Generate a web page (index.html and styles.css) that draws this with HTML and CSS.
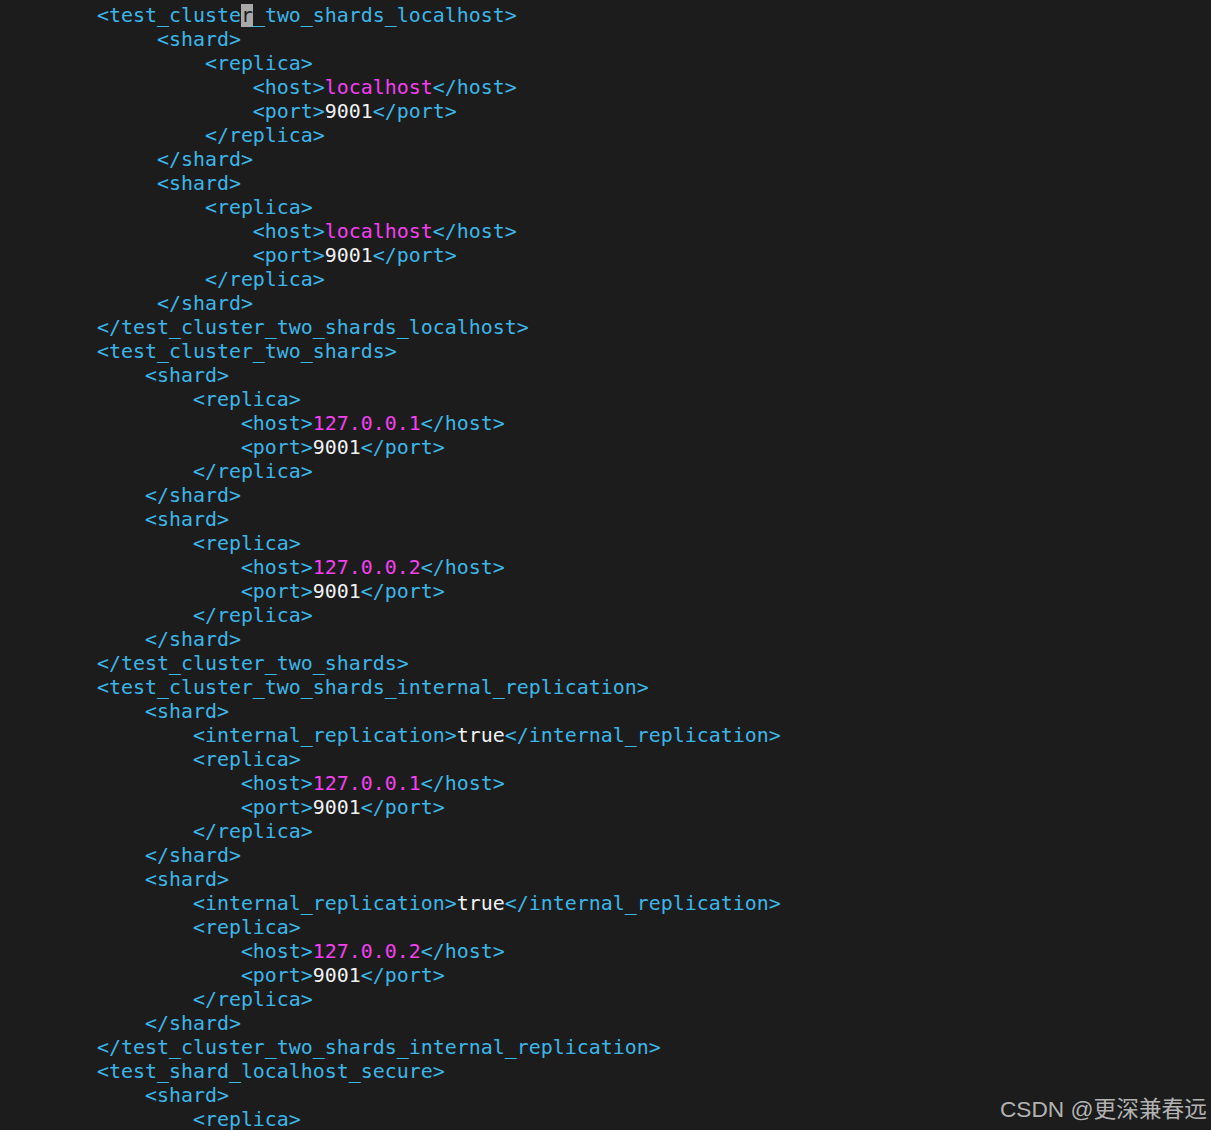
FILE: index.html
```html
<!DOCTYPE html>
<html lang="en">
<head>
  <meta charset="UTF-8" />
  <meta name="viewport" content="width=device-width, initial-scale=1.0">
  <title>config.xml</title>
  <link rel="stylesheet" href="styles.css">
</head>
<body>
  <div class="terminal">
<pre class="code"><span class="t">        &lt;test_cluste</span><span class="cur">r</span><span class="t">_two_shards_localhost&gt;</span>
<span class="t">             &lt;shard&gt;</span>
<span class="t">                 &lt;replica&gt;</span>
<span class="t">                     &lt;host&gt;</span><span class="h">localhost</span><span class="t">&lt;/host&gt;</span>
<span class="t">                     &lt;port&gt;</span><span class="v">9001</span><span class="t">&lt;/port&gt;</span>
<span class="t">                 &lt;/replica&gt;</span>
<span class="t">             &lt;/shard&gt;</span>
<span class="t">             &lt;shard&gt;</span>
<span class="t">                 &lt;replica&gt;</span>
<span class="t">                     &lt;host&gt;</span><span class="h">localhost</span><span class="t">&lt;/host&gt;</span>
<span class="t">                     &lt;port&gt;</span><span class="v">9001</span><span class="t">&lt;/port&gt;</span>
<span class="t">                 &lt;/replica&gt;</span>
<span class="t">             &lt;/shard&gt;</span>
<span class="t">        &lt;/test_cluster_two_shards_localhost&gt;</span>
<span class="t">        &lt;test_cluster_two_shards&gt;</span>
<span class="t">            &lt;shard&gt;</span>
<span class="t">                &lt;replica&gt;</span>
<span class="t">                    &lt;host&gt;</span><span class="h">127.0.0.1</span><span class="t">&lt;/host&gt;</span>
<span class="t">                    &lt;port&gt;</span><span class="v">9001</span><span class="t">&lt;/port&gt;</span>
<span class="t">                &lt;/replica&gt;</span>
<span class="t">            &lt;/shard&gt;</span>
<span class="t">            &lt;shard&gt;</span>
<span class="t">                &lt;replica&gt;</span>
<span class="t">                    &lt;host&gt;</span><span class="h">127.0.0.2</span><span class="t">&lt;/host&gt;</span>
<span class="t">                    &lt;port&gt;</span><span class="v">9001</span><span class="t">&lt;/port&gt;</span>
<span class="t">                &lt;/replica&gt;</span>
<span class="t">            &lt;/shard&gt;</span>
<span class="t">        &lt;/test_cluster_two_shards&gt;</span>
<span class="t">        &lt;test_cluster_two_shards_internal_replication&gt;</span>
<span class="t">            &lt;shard&gt;</span>
<span class="t">                &lt;internal_replication&gt;</span><span class="v">true</span><span class="t">&lt;/internal_replication&gt;</span>
<span class="t">                &lt;replica&gt;</span>
<span class="t">                    &lt;host&gt;</span><span class="h">127.0.0.1</span><span class="t">&lt;/host&gt;</span>
<span class="t">                    &lt;port&gt;</span><span class="v">9001</span><span class="t">&lt;/port&gt;</span>
<span class="t">                &lt;/replica&gt;</span>
<span class="t">            &lt;/shard&gt;</span>
<span class="t">            &lt;shard&gt;</span>
<span class="t">                &lt;internal_replication&gt;</span><span class="v">true</span><span class="t">&lt;/internal_replication&gt;</span>
<span class="t">                &lt;replica&gt;</span>
<span class="t">                    &lt;host&gt;</span><span class="h">127.0.0.2</span><span class="t">&lt;/host&gt;</span>
<span class="t">                    &lt;port&gt;</span><span class="v">9001</span><span class="t">&lt;/port&gt;</span>
<span class="t">                &lt;/replica&gt;</span>
<span class="t">            &lt;/shard&gt;</span>
<span class="t">        &lt;/test_cluster_two_shards_internal_replication&gt;</span>
<span class="t">        &lt;test_shard_localhost_secure&gt;</span>
<span class="t">            &lt;shard&gt;</span>
<span class="t">                &lt;replica&gt;</span></pre>
    <div class="watermark">CSDN @更深兼春远</div>
  </div>
</body>
</html>
```

FILE: styles.css
```css
* { margin: 0; padding: 0; box-sizing: border-box; }

body {
  background: #1c1c1c;
  overflow: hidden;
}

.terminal {
  position: relative;
  width: 1211px;
  height: 1130px;
  background: #1c1c1c;
  padding: 4px 0 0 1px;
}

.code {
  font-family: "DejaVu Sans Mono", monospace;
  font-size: 19.93px;
  line-height: 24px;
  color: #3cb6e8;
  white-space: pre;
}

.t { color: #3cb6e8; }
.h { color: #f43ff2; }
.v { color: #f2f2f2; }

.cur {
  background: #a9a9a9;
  color: #1c1c1c;
}

.watermark {
  position: absolute;
  right: 4px;
  bottom: 6px;
  font-family: "Liberation Sans", "Noto Sans CJK SC", sans-serif;
  font-size: 22.7px;
  color: #b2b2b2;
}
```
